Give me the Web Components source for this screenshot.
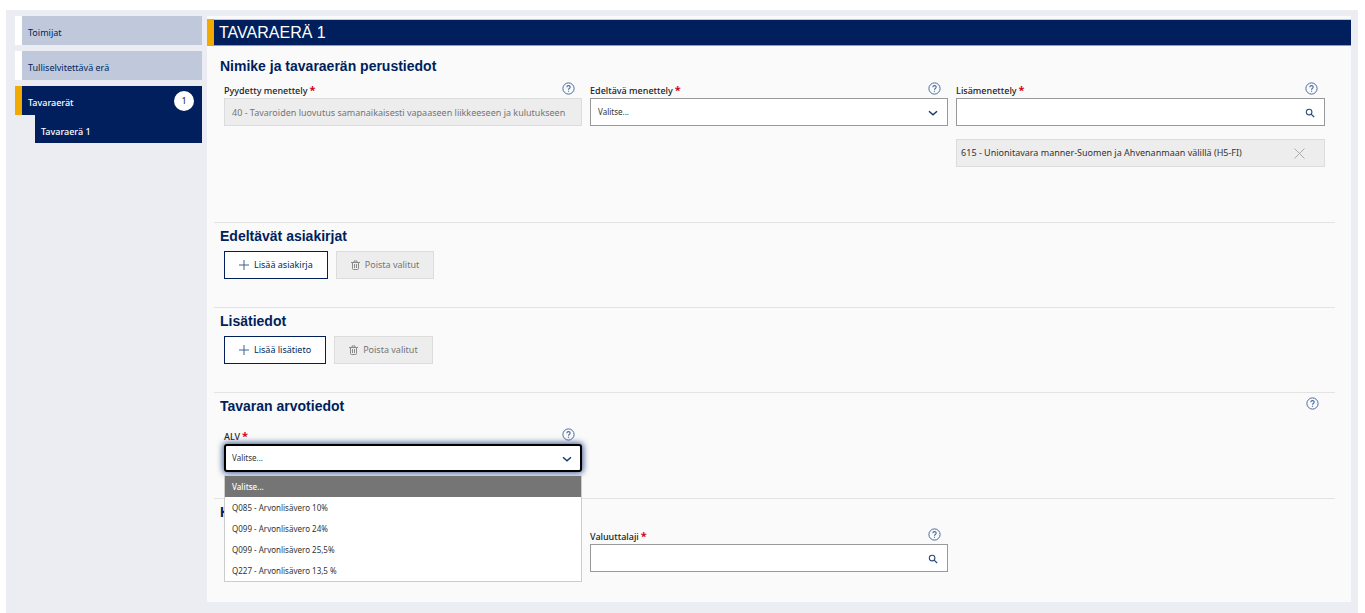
<!DOCTYPE html>
<html lang="fi">
<head>
<meta charset="utf-8">
<meta name="viewport" content="width=device-width, initial-scale=1">
<title>Tavaraerä 1</title>
<style>
  :root {
    --navy: #001f5c;
    --orange: #f2a900;
    --shell: #ecedf2;
    --panel: #fafafa;
    --line: #e3e3e3;
    --muted: #ededed;
  }
  body {
    margin: 0;
    padding: 10px 7px 0 6px;
    background: #fff;
    color: #333;
    font: 9px/12px "Noto Sans", "Open Sans", sans-serif;
  }
</style>
</head>
<body>
<app-shell>
  <side-nav slot="nav">
    <nav-item>Toimijat</nav-item>
    <nav-item>Tulliselvitettävä erä</nav-item>
    <nav-item active count="1">Tavaraerät
      <sub-item slot="sub">Tavaraerä 1</sub-item>
    </nav-item>
  </side-nav>

  <page-title>TAVARAERÄ 1</page-title>

  <form-section first heading="Nimike ja tavaraerän perustiedot">
    <field-row>
      <text-field label="Pyydetty menettely" value="40 - Tavaroiden luovutus samanaikaisesti vapaaseen liikkeeseen ja kulutukseen"></text-field>
      <select-field label="Edeltävä menettely" options="Valitse..."></select-field>
      <search-field label="Lisämenettely">
        <value-chip>615 - Unionitavara manner-Suomen ja Ahvenanmaan välillä (H5-FI)</value-chip>
      </search-field>
    </field-row>
  </form-section>

  <form-section heading="Edeltävät asiakirjat">
    <button-row>
      <action-button icon="plus">Lisää asiakirja</action-button>
      <action-button icon="trash" disabled>Poista valitut</action-button>
    </button-row>
  </form-section>

  <form-section heading="Lisätiedot">
    <button-row>
      <action-button icon="plus">Lisää lisätieto</action-button>
      <action-button icon="trash" disabled>Poista valitut</action-button>
    </button-row>
  </form-section>

  <form-section heading="Tavaran arvotiedot" help spaced>
    <field-row>
      <select-field open label="ALV" options="Valitse...|Q085 - Arvonlisävero 10%|Q099 - Arvonlisävero 24%|Q099 - Arvonlisävero 25,5%|Q227 - Arvonlisävero 13,5 %"></select-field>
    </field-row>
  </form-section>

  <form-section heading="K">
    <field-row>
      <search-field second label="Valuuttalaji"></search-field>
    </field-row>
  </form-section>
</app-shell>

<script>
  const icons = {
    chevron: `<svg width="10" height="10" viewBox="0 0 10 10" fill="none" stroke="#14366f" stroke-width="1.4"><path d="M1 3.2 5 6.8 9 3.2"/></svg>`,
    search: `<svg width="10" height="10" viewBox="0 0 10 10" fill="none" stroke="#2b4a82" stroke-width="1.1"><circle cx="4.1" cy="4.1" r="2.8"/><path d="M6.1 6.1 9.2 9" stroke-width="1.3"/></svg>`,
    close: `<svg width="11" height="11" viewBox="0 0 11 11" fill="none" stroke="#aaa" stroke-width="1"><path d="M.5.5 10.5 10.5M10.5.5.5 10.5"/></svg>`,
    plus: `<svg width="10" height="10" viewBox="0 0 10 10" fill="none" stroke="#42618f" stroke-width="1"><path d="M5 0V10M0 5H10"/></svg>`,
    trash: `<svg width="9" height="10" viewBox="0 0 9 10" fill="none" stroke="#8a8a8a" stroke-width="1"><path d="M0 2.5H9M3 2.5V1H6V2.5M1.5 2.5V8.5Q1.5 9.5 2.5 9.5H6.5Q7.5 9.5 7.5 8.5V2.5M3.5 4V8M5.5 4V8"/></svg>`,
    help: `<svg width="13" height="13" viewBox="0 0 13 13" fill="none" stroke="#4a6c9e" stroke-width="1"><circle cx="6.5" cy="6.5" r="5.6"/><path d="M4.8 5.2Q4.8 3.6 6.5 3.6T8.2 5.1Q8.2 5.9 7.3 6.4T6.5 7.8M6.5 8.7V9.8" stroke-width="1.1"/></svg>`
  };

  class BaseElement extends HTMLElement {
    constructor() {
      super();
      this.attachShadow({ mode: "open" });
    }
    connectedCallback() {
      const template = document.createElement("template");
      template.innerHTML = this.render();
      this.shadowRoot.replaceChildren(template.content.cloneNode(true));
    }
  }

  class AppShell extends BaseElement {
    render() {
      return `
      <style>
        :host {
          display: flex;
          align-items: flex-start;
          gap: 5px;
          box-sizing: border-box;
          min-height: calc(100vh - 10px);
          padding: 6px 7px 8px 9px;
          background: var(--shell);
        }
        aside { flex: 0 0 187px; }
        main {
          flex: 1;
          min-width: 0;
          padding: 3px 0 2px;
          background: var(--panel);
        }
      </style>
      <aside><slot name="nav"></slot></aside>
      <main><slot></slot></main>`;
    }
  }

  class SideNav extends BaseElement {
    render() {
      return `
      <style>
        :host { display: block; }
        nav {
          display: flex;
          flex-direction: column;
          gap: 6px;
        }
      </style>
      <nav><slot></slot></nav>`;
    }
  }

  class NavItem extends BaseElement {
    render() {
      const count = this.getAttribute("count");
      return `
      <style>
        :host { display: block; }
        a {
          display: flex;
          align-items: center;
          justify-content: space-between;
          box-sizing: border-box;
          height: 29px;
          padding: 5px 8px 0 6px;
          border-left: 7px solid #fff;
          background: #bfc9db;
          color: var(--navy);
          text-decoration: none;
        }
        :host([active]) a {
          border-color: var(--orange);
          background: var(--navy);
          color: #fff;
          font-weight: 500;
        }
        .count {
          width: 20px;
          margin-top: -5px;
          border-radius: 10px;
          background: #fff;
          color: var(--navy);
          font-weight: 400;
          line-height: 20px;
          text-align: center;
        }
      </style>
      <a href="#"><span><slot></slot></span>${count ? `<span class="count">${count}</span>` : ""}</a>
      <slot name="sub"></slot>`;
    }
  }

  class SubItem extends BaseElement {
    render() {
      return `
      <style>
        :host { display: block; margin-left: 20px; }
        a {
          display: block;
          padding: 11px 6px 5px;
          background: var(--navy);
          color: #fff;
          font-weight: 500;
          text-decoration: none;
        }
      </style>
      <a href="#"><slot></slot></a>`;
    }
  }

  class PageTitle extends BaseElement {
    render() {
      return `
      <style>
        :host {
          display: block;
          border-left: 7px solid var(--orange);
          background: var(--navy);
        }
        h1 {
          margin: 0;
          padding-left: 5px;
          border-top: 1px solid #bfc9db;
          border-bottom: 1px solid #c99a2c;
          color: #fff;
          font: 16px/25px "Liberation Sans", Arial, sans-serif;
        }
      </style>
      <h1><slot></slot></h1>`;
    }
  }

  class FormSection extends BaseElement {
    render() {
      return `
      <style>
        :host {
          display: block;
          margin: 0 16px 0 7px;
          padding: 4px 0 28px;
          border-top: 1px solid var(--line);
        }
        :host([first]) { padding: 11px 0 55px; border-top: 0; }
        :host([spaced]) { padding-bottom: 26px; }
        header {
          display: flex;
          justify-content: space-between;
          align-items: flex-start;
          margin-bottom: 6px;
          padding: 0 16px 0 6px;
        }
        :host([spaced]) header { margin-bottom: 12px; }
        h2 {
          margin: 0;
          color: var(--navy);
          font: bold 14px/18px "Liberation Sans", Arial, sans-serif;
        }
        button { display: flex; padding: 0; border: 0; background: none; }
      </style>
      <header>
        <h2>${this.getAttribute("heading")}</h2>
        ${this.hasAttribute("help") ? `<button type="button" aria-label="Ohje">${icons.help}</button>` : ""}
      </header>
      <slot></slot>`;
    }
  }

  class FieldRow extends BaseElement {
    render() {
      return `
      <style>
        :host {
          display: grid;
          grid-template-columns: 33fr 33fr 34fr;
          gap: 8px;
          align-items: start;
          padding: 0 10px;
        }
      </style>
      <slot></slot>`;
    }
  }

  class ButtonRow extends BaseElement {
    render() {
      return `
      <style>
        :host { display: flex; gap: 8px; padding: 0 10px; }
      </style>
      <slot></slot>`;
    }
  }

  class ActionButton extends BaseElement {
    render() {
      return `
      <style>
        :host { display: block; }
        button {
          display: flex;
          align-items: center;
          gap: 5px;
          height: 28px;
          padding: 0 14px;
          border: 1px solid var(--navy);
          background: #fff;
          color: var(--navy);
          font: inherit;
        }
        button:disabled {
          border-color: #dcdcdc;
          background: var(--muted);
          color: #757575;
        }
      </style>
      <button type="button" ${this.hasAttribute("disabled") ? "disabled" : ""}>${icons[this.getAttribute("icon")]}<slot></slot></button>`;
    }
  }

  // label row, help button and box shared by all the fields
  class BaseField extends BaseElement {
    render() {
      return `
      <style>
        :host { display: block; min-width: 0; }
        :host([second]) { grid-column: 2; }
        .top {
          display: flex;
          justify-content: space-between;
          height: 17px;
        }
        label { display: flex; gap: 2px; padding-top: 4px; font-weight: 500; color: #222; white-space: nowrap; }
        .required { color: #d0021b; font-size: 11px; font-weight: 700; line-height: 10px; }
        .top button { height: 15px; margin-right: 7px; }
        button { display: flex; align-items: center; padding: 0; border: 0; background: none; }
        .box { position: relative; }
        input, select {
          display: block;
          box-sizing: border-box;
          width: 100%;
          height: 28px;
          margin: 0;
          padding: 0 7px;
          border: 1px solid #999;
          border-radius: 0;
          outline: 0;
          appearance: none;
          background: #fff;
          color: #333;
          font: inherit;
        }
        input:disabled {
          border-color: #dcdcdc;
          background: var(--muted);
          color: #757575;
          opacity: 1;
        }
        select { font-size: 8px; }
        .icon {
          position: absolute;
          top: 0;
          right: 10px;
          display: flex;
          align-items: center;
          height: 30px;
          pointer-events: none;
        }
        :host([open]) select {
          border: 2px solid #000;
          border-radius: 3px;
          padding: 0 6px;
          box-shadow: 0 0 6px 1px #34528c;
        }
        ul {
          position: absolute;
          z-index: 10;
          top: 31px;
          left: 0;
          right: 0;
          margin: 0;
          padding: 0;
          border: 1px solid #ccc;
          background: #fff;
          list-style: none;
          font-size: 8px;
        }
        li { padding: 0 7px; line-height: 21px; }
        li[aria-selected="true"] { background: #757575; color: #fff; font-weight: 500; }
      </style>
      <div class="top">
        <label for="control">${this.getAttribute("label")}<span class="required">*</span></label>
        <button type="button" aria-label="Ohje">${icons.help}</button>
      </div>
      <div class="box">${this.control()}</div>
      <slot></slot>`;
    }
  }

  class TextField extends BaseField {
    control() {
      return `<input id="control" type="text" value="${this.getAttribute("value")}" disabled>`;
    }
  }

  class SearchField extends BaseField {
    control() {
      return `<input id="control" type="text"><span class="icon">${icons.search}</span>`;
    }
  }

  class SelectField extends BaseField {
    control() {
      const options = this.getAttribute("options").split("|");
      const list = options.map((text, i) => `<li role="option" aria-selected="${i === 0}">${text}</li>`).join("");
      return `
        <select id="control">${options.map(text => `<option>${text}</option>`).join("")}</select>
        <span class="icon">${icons.chevron}</span>
        ${this.hasAttribute("open") ? `<ul role="listbox">${list}</ul>` : ""}`;
    }
  }

  class ValueChip extends BaseElement {
    render() {
      return `
      <style>
        :host {
          display: flex;
          align-items: center;
          justify-content: space-between;
          box-sizing: border-box;
          height: 28px;
          margin-top: 13px;
          padding: 0 19px 0 4px;
          border: 1px solid #dcdcdc;
          background: var(--muted);
        }
        button { display: flex; padding: 0; border: 0; background: none; }
      </style>
      <span><slot></slot></span>
      <button type="button" aria-label="Poista">${icons.close}</button>`;
    }
  }

  customElements.define("app-shell", AppShell);
  customElements.define("side-nav", SideNav);
  customElements.define("nav-item", NavItem);
  customElements.define("sub-item", SubItem);
  customElements.define("page-title", PageTitle);
  customElements.define("form-section", FormSection);
  customElements.define("field-row", FieldRow);
  customElements.define("button-row", ButtonRow);
  customElements.define("action-button", ActionButton);
  customElements.define("text-field", TextField);
  customElements.define("search-field", SearchField);
  customElements.define("select-field", SelectField);
  customElements.define("value-chip", ValueChip);
</script>
</body>
</html>
